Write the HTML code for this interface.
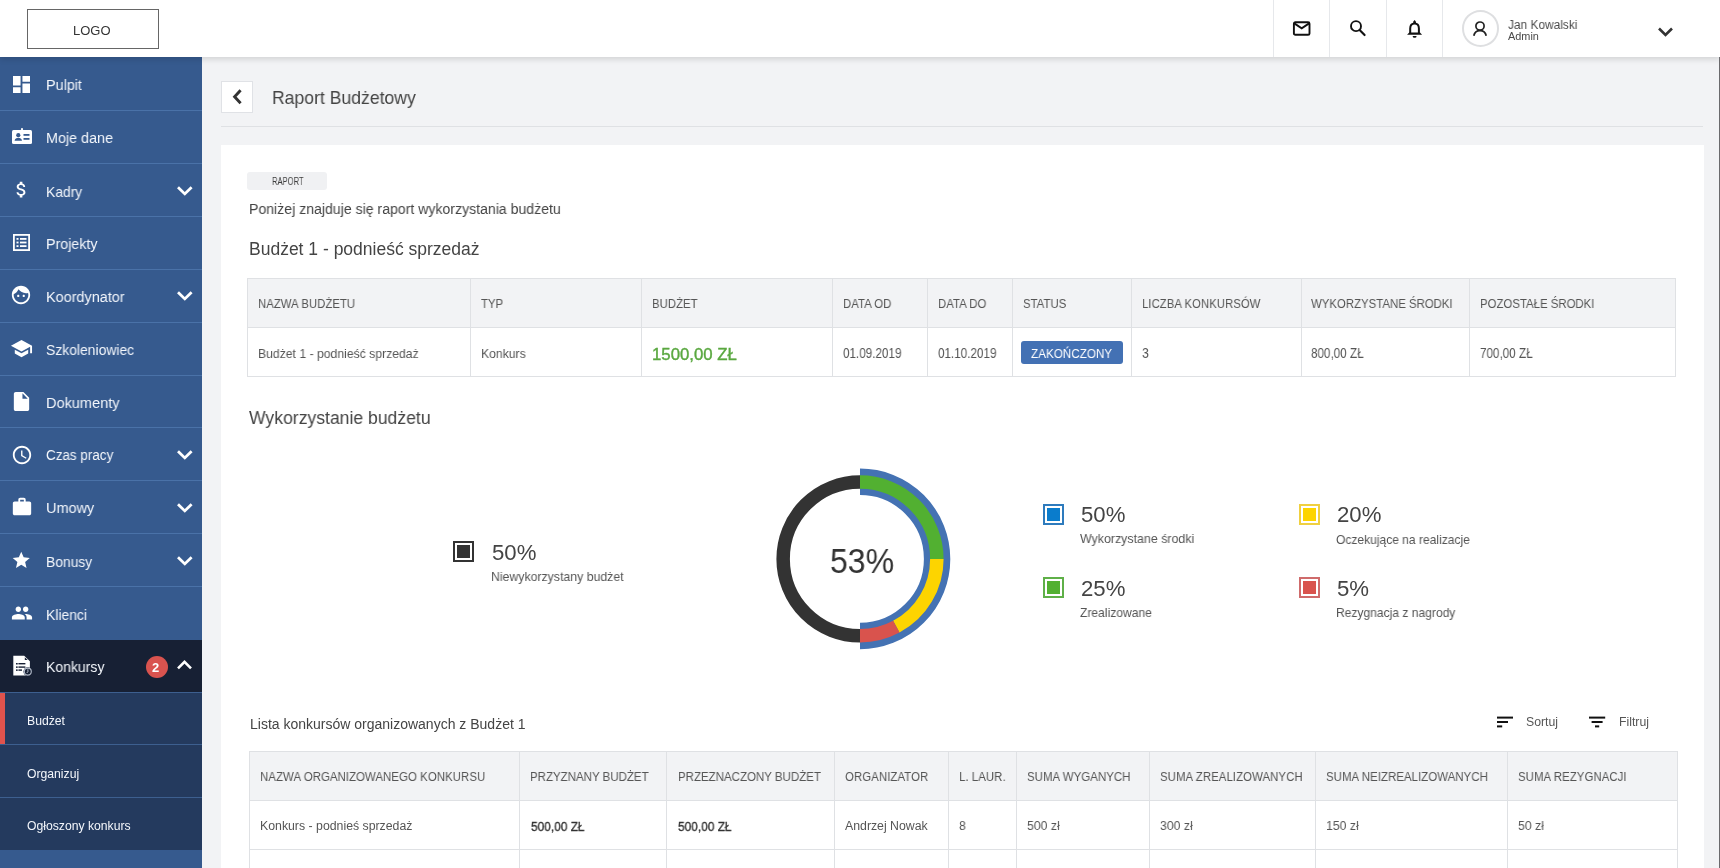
<!DOCTYPE html><html><head><meta charset="utf-8"><style>
*{box-sizing:border-box;margin:0;padding:0}
html,body{width:1720px;height:868px;overflow:hidden}
body{position:relative;background:#f2f3f5;font-family:"Liberation Sans",sans-serif;color:#444}
.t{position:absolute;white-space:nowrap;line-height:1;will-change:transform}
svg{position:absolute;display:block}
#hdr{position:absolute;left:0;top:0;width:1720px;height:57px;background:#fff;z-index:5;box-shadow:0 2px 6px rgba(0,0,0,.15)}
#logo{position:absolute;left:27px;top:9px;width:132px;height:40px;border:1px solid #666}
.hdiv{position:absolute;top:0;width:1px;height:57px;background:#e6e8eb}
#side{position:absolute;left:0;top:57px;width:202px;height:811px;background:#365a8e;z-index:3;overflow:hidden}
.mi{position:absolute;left:0;width:202px}
.sep{position:absolute;left:0;width:202px;height:1px;background:#4a72a8}
#rline{position:absolute;left:1719px;top:57px;width:1px;height:811px;background:#6a6a6d;z-index:6}
#card{position:absolute;left:221px;top:145px;width:1483px;height:760px;background:#fff}
table{border-collapse:collapse;position:absolute;table-layout:fixed}
td,th{border:1px solid #dfe1e4;font-weight:normal;text-align:left;white-space:nowrap;overflow:hidden;padding:0 0 0 10px}
th{background:#f2f3f5;color:#555;font-size:11.5px}
td{color:#555;font-size:12.2px}
</style></head><body><div id="hdr"><div id="logo"></div><div class="t" style="left:73.20px;top:24.00px;font-size:13.00px;color:#333;">LOGO</div><div class="hdiv" style="left:1273px"></div><div class="hdiv" style="left:1329px"></div><div class="hdiv" style="left:1386px"></div><div class="hdiv" style="left:1442px"></div><svg style="left:1292px;top:21px" width="20" height="16" viewBox="0 0 20 16"><rect x="1.9" y="1.3" width="15.6" height="12.5" rx="1.4" fill="none" stroke="#111" stroke-width="1.9"/><path d="M2.3 2.4 L9.7 7.3 L17.1 2.4" fill="none" stroke="#111" stroke-width="1.9"/></svg><svg style="left:1348px;top:19px" width="20" height="20" viewBox="0 0 20 20"><circle cx="8" cy="7.15" r="5" fill="none" stroke="#111" stroke-width="1.9"/><path d="M11.6 10.9 L16.6 16.1" stroke="#111" stroke-width="2.1" stroke-linecap="round"/></svg><svg style="left:1405px;top:18px" width="19" height="21" viewBox="0 0 19 21"><path d="M5.2 15.2 V10.5 C5.2 7.3 7 5.5 9.6 5.5 C12.2 5.5 13.9 7.3 13.9 10.5 V15.2" fill="none" stroke="#111" stroke-width="2"/><path d="M2.1 16.8 L4.2 14.6 H15 L17.1 16.8 Z" fill="#111"/><path d="M8.3 3.6 L9.6 1.9 L10.9 3.6 L11 5 H8.2 Z" fill="#111"/><path d="M7.6 17.9 H11.6 A2 1.9 0 0 1 7.6 17.9 Z" fill="#111"/></svg><div style="position:absolute;left:1461.5px;top:10.3px;width:37px;height:36.5px;border-radius:50%;border:2px solid #dedfe1"></div><svg style="left:1472px;top:21px" width="16" height="16" viewBox="0 0 16 16"><circle cx="8" cy="5.1" r="4.1" fill="none" stroke="#222" stroke-width="1.7"/><path d="M1.8 14.7 C2.5 11.5 4.5 9.6 8 9.6 C11.5 9.6 13.5 11.5 14.2 14.7" fill="none" stroke="#222" stroke-width="1.8"/></svg><div class="t" style="left:1507.90px;top:17.92px;font-size:13.09px;transform:scaleX(0.9091);transform-origin:0 0;color:#4a4a4a;">Jan Kowalski</div><div class="t" style="left:1507.90px;top:31.17px;font-size:10.90px;color:#4a4a4a;">Admin</div><svg style="left:1657px;top:26px" width="17" height="12" viewBox="0 0 17 12"><path d="M2 2.5 L8.5 9 L15 2.5" fill="none" stroke="#333" stroke-width="2.6"/></svg></div>
<div id="side"><svg style="left:13px;top:18.7px" width="17" height="17" viewBox="3 3 18 18"><path fill="#fff" d="M3 13h8V3H3v10zm0 8h8v-6H3v6zm10 0h8V11h-8v10zm0-18v6h8V3h-8z"/></svg><div class="t" style="left:46.00px;top:21.28px;font-size:14.68px;transform:scaleX(0.9804);transform-origin:0 0;color:#f4f7fc;">Pulpit</div><div class="sep" style="top:53.0px"></div><svg style="left:12px;top:70.9px" width="20" height="16" viewBox="0 0 20 16"><rect x="0" y="2" width="20" height="14" rx="1.5" fill="#fff"/><circle cx="10" cy="1.2" r="1.1" fill="#fff"/><circle cx="6.3" cy="7.2" r="2.1" fill="#365a8e"/><path d="M2.6 12.8 C3 10.5 4.5 9.8 6.3 9.8 C8.1 9.8 9.6 10.5 10 12.8 Z" fill="#365a8e"/><rect x="11.5" y="6" width="6" height="1.8" fill="#365a8e"/><rect x="11.5" y="10" width="6" height="1.8" fill="#365a8e"/></svg><div class="t" style="left:46.00px;top:74.21px;font-size:14.64px;transform:scaleX(0.9804);transform-origin:0 0;color:#f4f7fc;">Moje dane</div><div class="sep" style="top:105.9px"></div><svg style="left:10.5px;top:122.3px" width="21" height="21" viewBox="0 0 24 24"><path fill="#fff" d="M11.8 10.9c-2.27-.59-3-1.2-3-2.15 0-1.09 1.01-1.85 2.7-1.850 1.78 0 2.44.85 2.5 2.1h2.21c-.07-1.72-1.12-3.3-3.21-3.81V3h-3v2.16c-1.94.42-3.5 1.68-3.5 3.61 0 2.31 1.910 3.46 4.7 4.13 2.5.6 3 1.48 3 2.41 0 .69-.49 1.79-2.7 1.79-2.06 0-2.87-.92-2.98-2.1h-2.2c.12 2.19 1.76 3.42 3.68 3.83V21h3v-2.15c1.95-.37 3.5-1.5 3.5-3.55 0-2.84-2.43-3.81-4.7-4.4z"/></svg><div class="t" style="left:46.00px;top:127.53px;font-size:14.14px;transform:scaleX(0.9804);transform-origin:0 0;color:#f4f7fc;">Kadry</div><svg style="left:176px;top:127.5px" width="17" height="12" viewBox="0 0 17 12"><path d="M2 2.2 L8.8 8.9 L15.6 2.2" fill="none" stroke="#fff" stroke-width="2.8"/></svg><div class="sep" style="top:158.8px"></div><svg style="left:13px;top:176.7px" width="17" height="17" viewBox="0 0 17 17"><rect x="0.9" y="0.9" width="15.2" height="15.2" fill="none" stroke="#fff" stroke-width="1.8"/><rect x="3.5" y="4" width="2" height="1.8" fill="#fff"/><rect x="7" y="4" width="6.5" height="1.8" fill="#fff"/><rect x="3.5" y="7.6" width="2" height="1.8" fill="#fff"/><rect x="7" y="7.6" width="6.5" height="1.8" fill="#fff"/><rect x="3.5" y="11.2" width="2" height="1.8" fill="#fff"/><rect x="7" y="11.2" width="6.5" height="1.8" fill="#fff"/></svg><div class="t" style="left:46.00px;top:180.09px;font-size:14.55px;transform:scaleX(0.9804);transform-origin:0 0;color:#f4f7fc;">Projekty</div><div class="sep" style="top:211.7px"></div><svg style="left:10px;top:227.1px" width="22" height="22" viewBox="0 0 24 24"><path fill="#fff" d="M9 11.75c-.69 0-1.25.56-1.25 1.25s.56 1.25 1.25 1.25 1.25-.56 1.25-1.25-.56-1.25-1.25-1.25zm6 0c-.69 0-1.25.56-1.25 1.25s.56 1.25 1.25 1.25 1.25-.56 1.25-1.25-.56-1.25-1.25-1.25zM12 2C6.48 2 2 6.48 2 12s4.48 10 10 10 10-4.48 10-10S17.52 2 12 2zm0 18c-4.41 0-8-3.59-8-8 0-.29.02-.58.05-.86 2.36-1.05 4.230-2.98 5.21-5.37C11.07 8.33 14.05 10 17.42 10c.78 0 1.53-.09 2.25-.26.21.71.33 1.47.33 2.26 0 4.41-3.59 8-8 8z"/></svg><div class="t" style="left:46.00px;top:232.84px;font-size:14.72px;transform:scaleX(0.9804);transform-origin:0 0;color:#f4f7fc;">Koordynator</div><svg style="left:176px;top:233.3px" width="17" height="12" viewBox="0 0 17 12"><path d="M2 2.2 L8.8 8.9 L15.6 2.2" fill="none" stroke="#fff" stroke-width="2.8"/></svg><div class="sep" style="top:264.6px"></div><svg style="left:10px;top:279.5px" width="23" height="23" viewBox="0 0 24 24"><path fill="#fff" d="M5 13.18v4L12 21l7-3.82v-4L12 17l-7-3.82zM12 3L1 9l11 6 9-4.91V17h2V9L12 3z"/></svg><div class="t" style="left:46.00px;top:286.18px;font-size:14.20px;transform:scaleX(0.9804);transform-origin:0 0;color:#f4f7fc;">Szkoleniowiec</div><div class="sep" style="top:317.5px"></div><svg style="left:10.4px;top:332.6px" width="23" height="23" viewBox="0 0 24 24"><path fill="#fff" d="M6 2c-1.1 0-1.99.9-1.990 2L4 20c0 1.1.89 2 1.99 2H18c1.1 0 2-.9 2-2V8l-6-6H6zm7 7V3.5L18.5 9H13z"/></svg><div class="t" style="left:46.00px;top:338.55px;font-size:14.82px;transform:scaleX(0.9804);transform-origin:0 0;color:#f4f7fc;">Dokumenty</div><div class="sep" style="top:370.4px"></div><svg style="left:10.6px;top:386.6px" width="22" height="22" viewBox="0 0 24 24"><path fill="#fff" d="M11.99 2C6.47 2 2 6.48 2 12s4.47 10 9.99 10C17.52 22 22 17.52 22 12S17.52 2 11.99 2zM12 20c-4.42 0-8-3.58-8-8s3.58-8 8-8 8 3.58 8 8-3.58 8-8 8zm.5-13H11v6l5.25 3.15.75-1.23-4.5-2.67z"/></svg><div class="t" style="left:46.00px;top:392.40px;font-size:13.71px;transform:scaleX(0.9804);transform-origin:0 0;color:#f4f7fc;">Czas pracy</div><svg style="left:176px;top:392.0px" width="17" height="12" viewBox="0 0 17 12"><path d="M2 2.2 L8.8 8.9 L15.6 2.2" fill="none" stroke="#fff" stroke-width="2.8"/></svg><div class="sep" style="top:423.3px"></div><svg style="left:10.6px;top:439.2px" width="22" height="22" viewBox="0 0 24 24"><path fill="#fff" d="M20 6h-4V4c0-1.11-.89-2-2-2h-4c-1.11 0-2 .89-2 2v2H4c-1.11 0-1.99.89-1.99 2L2 19c0 1.11.89 2 2 2h16c1.11 0 2-.89 2-2V8c0-1.11-.89-2-2-2zm-6 0h-4V4h4v2z"/></svg><div class="t" style="left:46.00px;top:444.41px;font-size:14.75px;transform:scaleX(0.9804);transform-origin:0 0;color:#f4f7fc;">Umowy</div><svg style="left:176px;top:444.9px" width="17" height="12" viewBox="0 0 17 12"><path d="M2 2.2 L8.8 8.9 L15.6 2.2" fill="none" stroke="#fff" stroke-width="2.8"/></svg><div class="sep" style="top:476.2px"></div><svg style="left:11.1px;top:492.7px" width="20.5" height="20.5" viewBox="0 0 24 24"><path fill="#fff" d="M12 17.27L18.18 21l-1.64-7.03L22 9.24l-7.19-.61L12 2 9.19 8.630 2 9.24l5.46 4.73L5.82 21z"/></svg><div class="t" style="left:46.00px;top:497.84px;font-size:14.13px;transform:scaleX(0.9804);transform-origin:0 0;color:#f4f7fc;">Bonusy</div><svg style="left:176px;top:497.8px" width="17" height="12" viewBox="0 0 17 12"><path d="M2 2.2 L8.8 8.9 L15.6 2.2" fill="none" stroke="#fff" stroke-width="2.8"/></svg><div class="sep" style="top:529.1px"></div><svg style="left:10.55px;top:544.5px" width="22" height="22" viewBox="0 0 24 24"><path fill="#fff" d="M16 11c1.66 0 2.99-1.34 2.99-3S17.66 5 16 5c-1.66 0-3 1.34-3 3s1.34 3 3 3zm-8 0c1.66 0 2.99-1.34 2.99-3S9.66 5 8 5C6.34 5 5 6.34 5 8s1.34 3 3 3zm0 2c-2.33 0-7 1.17-7 3.5V19h14v-2.5c0-2.33-4.67-3.5-7-3.5zm8 0c-.29 0-.62.02-.97.05 1.16.84 1.97 1.97 1.97 3.45V19h6v-2.5c0-2.33-4.67-3.5-7-3.5z"/></svg><div class="t" style="left:46.00px;top:550.66px;font-size:14.23px;transform:scaleX(0.9804);transform-origin:0 0;color:#f4f7fc;">Klienci</div><div class="mi" style="top:583px;height:52px;background:#172034"></div><svg style="left:12px;top:598px" width="22" height="24" viewBox="0 0 22 24"><path fill="#fff" d="M1.3 0.8 H12.2 L17.9 6.2 V20.6 H1.3 Z"/><path fill="#172034" d="M12.8 2.3 V5.1 H15.7 Z"/><rect x="4" y="8" width="1.7" height="1.5" fill="#172034"/><rect x="6.4" y="8" width="7" height="1.4" fill="#172034"/><rect x="4" y="11.4" width="1.7" height="1.5" fill="#172034"/><rect x="6.4" y="11.4" width="7" height="1.4" fill="#172034"/><rect x="4" y="14.4" width="1.7" height="1.5" fill="#172034"/><rect x="6.4" y="14.4" width="3.6" height="1.4" fill="#172034"/><circle cx="15.8" cy="16.6" r="4.3" fill="#172034"/><circle cx="15.8" cy="16.6" r="3.5" fill="none" stroke="#b4bccb" stroke-width="1.1"/><path d="M15.9 14.3 V16.8 L14.7 18" fill="none" stroke="#b4bccb" stroke-width="1"/></svg><div class="t" style="left:46.00px;top:602.90px;font-size:14.29px;transform:scaleX(0.9804);transform-origin:0 0;color:#f4f7fc;">Konkursy</div><div style="position:absolute;left:146px;top:599px;width:22px;height:22px;border-radius:50%;background:#d9534f"></div><div class="t" style="left:152.20px;top:604.00px;font-size:13.00px;color:#fff;font-weight:bold;">2</div><svg style="left:176px;top:602px" width="17" height="12" viewBox="0 0 17 12"><path d="M2 9.3 L8.5 2.8 L15 9.3" fill="none" stroke="#fff" stroke-width="2.6"/></svg><div class="mi" style="top:635px;height:158px;background:#243a5e"></div><div class="sep" style="top:635px;background:#3d5f8f"></div><div class="sep" style="top:687px;background:#3d5f8f"></div><div class="sep" style="top:740px;background:#3d5f8f"></div><div style="position:absolute;left:0;top:636px;width:5px;height:51px;background:#e0534d"></div><div class="t" style="left:27.40px;top:657.67px;font-size:12.20px;color:#f4f7fc;">Budżet</div><div class="t" style="left:27.40px;top:710.67px;font-size:12.20px;color:#f4f7fc;">Organizuj</div><div class="t" style="left:27.40px;top:762.67px;font-size:12.20px;color:#f4f7fc;">Ogłoszony konkurs</div></div>
<div style="position:absolute;left:221px;top:81px;width:32px;height:32px;background:#fff;border:1px solid #e0e2e6"></div><svg style="left:230px;top:87px" width="14" height="20" viewBox="0 0 14 20"><path d="M10.6 3.3 L4.6 9.8 L10.6 16.3" fill="none" stroke="#333" stroke-width="2.9"/></svg><div class="t" style="left:272.00px;top:89.06px;font-size:18.83px;transform:scaleX(0.9346);transform-origin:0 0;color:#444;">Raport Budżetowy</div><div style="position:absolute;left:221px;top:126px;width:1482px;height:1px;background:#dfe1e4"></div><div id="card"></div>
<div style="position:absolute;left:247px;top:172px;width:80px;height:18px;border-radius:3px;background:#f0f1f3"></div><div class="t" style="left:271.80px;top:176.91px;font-size:10.03px;transform:scaleX(0.7576);transform-origin:0 0;color:#3c3c3c;">RAPORT</div><div class="t" style="left:249.20px;top:201.71px;font-size:14.52px;transform:scaleX(0.9709);transform-origin:0 0;color:#444;">Poniżej znajduje się raport wykorzystania budżetu</div><div class="t" style="left:249.20px;top:241.19px;font-size:17.50px;color:#444;">Budżet 1 - podnieść sprzedaż</div>
<div style="position:absolute;left:247px;top:278px;width:1429px;height:99px;background:#dfe1e4"></div><div style="position:absolute;left:248px;top:279px;width:1427px;height:48px;background:#f2f3f5"></div><div style="position:absolute;left:248px;top:328px;width:1427px;height:48px;background:#fff"></div><div style="position:absolute;left:470px;top:279px;width:1px;height:97px;background:#dfe1e4"></div><div style="position:absolute;left:641px;top:279px;width:1px;height:97px;background:#dfe1e4"></div><div style="position:absolute;left:832px;top:279px;width:1px;height:97px;background:#dfe1e4"></div><div style="position:absolute;left:927px;top:279px;width:1px;height:97px;background:#dfe1e4"></div><div style="position:absolute;left:1012px;top:279px;width:1px;height:97px;background:#dfe1e4"></div><div style="position:absolute;left:1131px;top:279px;width:1px;height:97px;background:#dfe1e4"></div><div style="position:absolute;left:1301px;top:279px;width:1px;height:97px;background:#dfe1e4"></div><div style="position:absolute;left:1469px;top:279px;width:1px;height:97px;background:#dfe1e4"></div><div class="t" style="left:258.30px;top:297.99px;font-size:12.77px;transform:scaleX(0.8929);transform-origin:0 0;color:#555;">NAZWA BUDŻETU</div><div class="t" style="left:258.30px;top:346.95px;font-size:13.18px;transform:scaleX(0.9259);transform-origin:0 0;color:#555;">Budżet 1 - podnieść sprzedaż</div><div class="t" style="left:481.30px;top:297.99px;font-size:12.77px;transform:scaleX(0.8929);transform-origin:0 0;color:#555;">TYP</div><div class="t" style="left:481.30px;top:346.95px;font-size:13.18px;transform:scaleX(0.9259);transform-origin:0 0;color:#555;">Konkurs</div><div class="t" style="left:652.30px;top:297.99px;font-size:12.77px;transform:scaleX(0.8929);transform-origin:0 0;color:#555;">BUDŻET</div><div class="t" style="left:843.30px;top:297.99px;font-size:12.77px;transform:scaleX(0.8929);transform-origin:0 0;color:#555;">DATA OD</div><div class="t" style="left:843.30px;top:346.22px;font-size:14.04px;transform:scaleX(0.8333);transform-origin:0 0;color:#555;">01.09.2019</div><div class="t" style="left:938.30px;top:297.99px;font-size:12.77px;transform:scaleX(0.8929);transform-origin:0 0;color:#555;">DATA DO</div><div class="t" style="left:938.30px;top:346.22px;font-size:14.04px;transform:scaleX(0.8333);transform-origin:0 0;color:#555;">01.10.2019</div><div class="t" style="left:1022.80px;top:297.99px;font-size:12.77px;transform:scaleX(0.8929);transform-origin:0 0;color:#555;">STATUS</div><div class="t" style="left:1142.30px;top:297.99px;font-size:12.77px;transform:scaleX(0.8929);transform-origin:0 0;color:#555;">LICZBA KONKURSÓW</div><div class="t" style="left:1142.30px;top:345.71px;font-size:14.64px;transform:scaleX(0.8333);transform-origin:0 0;color:#555;">3</div><div class="t" style="left:1310.80px;top:297.99px;font-size:12.77px;transform:scaleX(0.8929);transform-origin:0 0;color:#555;">WYKORZYSTANE ŚRODKI</div><div class="t" style="left:1310.80px;top:346.22px;font-size:14.04px;transform:scaleX(0.8333);transform-origin:0 0;color:#555;">800,00 ZŁ</div><div class="t" style="left:1479.80px;top:297.99px;font-size:12.77px;transform:scaleX(0.8929);transform-origin:0 0;color:#555;">POZOSTAŁE ŚRODKI</div><div class="t" style="left:1479.80px;top:346.22px;font-size:14.04px;transform:scaleX(0.8333);transform-origin:0 0;color:#555;">700,00 ZŁ</div><div class="t" style="left:651.70px;top:347.08px;font-size:16.80px;color:#5aa840;-webkit-text-stroke:0.4px #5aa840;">1500,00 ZŁ</div><div style="position:absolute;left:1021px;top:341px;width:102px;height:23px;border-radius:3px;background:#4371b4"></div><div class="t" style="left:1031.20px;top:346.51px;font-size:13.45px;transform:scaleX(0.8696);transform-origin:0 0;color:#fff;">ZAKOŃCZONY</div>
<div class="t" style="left:249.20px;top:408.71px;font-size:18.30px;transform:scaleX(0.9615);transform-origin:0 0;color:#444;">Wykorzystanie budżetu</div><svg style="left:0;top:0" width="1720" height="868" viewBox="0 0 1720 868"><path d="M860.00 635.75 A76.85 76.85 0 0 1 860.00 482.05" fill="none" stroke="#333" stroke-width="13.5"/><path d="M860.00 481.80 A77.1 77.1 0 0 1 860.00 636.00" fill="none" stroke="#4472b3" stroke-width="26.4"/><path d="M860.00 482.05 A76.85 76.85 0 0 1 936.85 558.90" fill="none" stroke="#52b031" stroke-width="13.5"/><path d="M936.85 558.90 A76.85 76.85 0 0 1 896.32 626.63" fill="none" stroke="#fdd400" stroke-width="13.5"/><path d="M896.32 626.63 A76.85 76.85 0 0 1 860.00 635.75" fill="none" stroke="#d9534d" stroke-width="13.5"/></svg><div class="t" style="left:829.70px;top:542.80px;font-size:35.20px;transform:scaleX(0.9091);transform-origin:0 0;color:#333;">53%</div><div style="position:absolute;left:453px;top:540.5px;width:21px;height:21px;border:2px solid #333;padding:2px"><div style="width:13px;height:13px;background:#333"></div></div><div class="t" style="left:492.00px;top:541.61px;font-size:22.20px;color:#444;">50%</div><div class="t" style="left:491.20px;top:569.56px;font-size:13.04px;transform:scaleX(0.9434);transform-origin:0 0;color:#555;">Niewykorzystany budżet</div><div style="position:absolute;left:1043px;top:504px;width:21px;height:21px;border:2px solid #2e7bbd;padding:2px"><div style="width:13px;height:13px;background:#0a7ccc"></div></div><div class="t" style="left:1081.00px;top:504.41px;font-size:22.20px;color:#444;">50%</div><div class="t" style="left:1080.20px;top:533.38px;font-size:12.90px;transform:scaleX(0.9615);transform-origin:0 0;color:#555;">Wykorzystane środki</div><div style="position:absolute;left:1299px;top:504px;width:21px;height:21px;border:2px solid #f0d040;padding:2px"><div style="width:13px;height:13px;background:#fdd400"></div></div><div class="t" style="left:1337.00px;top:504.41px;font-size:22.20px;color:#444;">20%</div><div class="t" style="left:1336.20px;top:533.69px;font-size:12.53px;transform:scaleX(0.9615);transform-origin:0 0;color:#555;">Oczekujące na realizacje</div><div style="position:absolute;left:1043px;top:577.3px;width:21px;height:21px;border:2px solid #5fb048;padding:2px"><div style="width:13px;height:13px;background:#52b031"></div></div><div class="t" style="left:1081.00px;top:577.71px;font-size:22.20px;color:#444;">25%</div><div class="t" style="left:1080.20px;top:606.95px;font-size:12.58px;transform:scaleX(0.9615);transform-origin:0 0;color:#555;">Zrealizowane</div><div style="position:absolute;left:1299px;top:577.3px;width:21px;height:21px;border:2px solid #cf6b6b;padding:2px"><div style="width:13px;height:13px;background:#d9534d"></div></div><div class="t" style="left:1337.00px;top:577.71px;font-size:22.20px;color:#444;">5%</div><div class="t" style="left:1336.20px;top:606.97px;font-size:12.55px;transform:scaleX(0.9615);transform-origin:0 0;color:#555;">Rezygnacja z nagrody</div>
<div class="t" style="left:250.20px;top:717.25px;font-size:14.00px;color:#444;">Lista konkursów organizowanych z Budżet 1</div><svg style="left:1496px;top:716px" width="17" height="12" viewBox="0 0 17 12"><rect x="1" y="0.6" width="16" height="2" fill="#111"/><rect x="1" y="5" width="11" height="2" fill="#111"/><rect x="1" y="9.4" width="5.2" height="2" fill="#111"/></svg><div class="t" style="left:1526.20px;top:716.43px;font-size:12.25px;color:#555;">Sortuj</div><svg style="left:1589px;top:716px" width="17" height="12" viewBox="0 0 17 12"><rect x="0" y="0.6" width="16.2" height="2" fill="#111"/><rect x="2.6" y="5" width="11" height="2" fill="#111"/><rect x="6" y="9.4" width="4.2" height="2" fill="#111"/></svg><div class="t" style="left:1618.70px;top:716.43px;font-size:12.25px;color:#555;">Filtruj</div><div style="position:absolute;left:249px;top:751px;width:1429px;height:117px;background:#dfe1e4"></div><div style="position:absolute;left:250px;top:752px;width:1427px;height:48px;background:#f2f3f5"></div><div style="position:absolute;left:250px;top:801px;width:1427px;height:48px;background:#fff"></div><div style="position:absolute;left:250px;top:850px;width:1427px;height:18px;background:#fff"></div><div style="position:absolute;left:519px;top:752px;width:1px;height:116px;background:#dfe1e4"></div><div style="position:absolute;left:666px;top:752px;width:1px;height:116px;background:#dfe1e4"></div><div style="position:absolute;left:834px;top:752px;width:1px;height:116px;background:#dfe1e4"></div><div style="position:absolute;left:948px;top:752px;width:1px;height:116px;background:#dfe1e4"></div><div style="position:absolute;left:1016px;top:752px;width:1px;height:116px;background:#dfe1e4"></div><div style="position:absolute;left:1149px;top:752px;width:1px;height:116px;background:#dfe1e4"></div><div style="position:absolute;left:1315px;top:752px;width:1px;height:116px;background:#dfe1e4"></div><div style="position:absolute;left:1507px;top:752px;width:1px;height:116px;background:#dfe1e4"></div><div class="t" style="left:260.20px;top:770.50px;font-size:12.88px;transform:scaleX(0.8929);transform-origin:0 0;color:#555;">NAZWA ORGANIZOWANEGO KONKURSU</div><div class="t" style="left:260.20px;top:820.29px;font-size:12.30px;color:#555;">Konkurs - podnieś sprzedaż</div><div class="t" style="left:530.40px;top:770.50px;font-size:12.88px;transform:scaleX(0.8929);transform-origin:0 0;color:#555;">PRZYZNANY BUDŻET</div><div class="t" style="left:531.00px;top:819.62px;font-size:13.09px;transform:scaleX(0.9091);transform-origin:0 0;color:#333;-webkit-text-stroke:0.35px #333;">500,00 ZŁ</div><div class="t" style="left:677.50px;top:770.50px;font-size:12.88px;transform:scaleX(0.8929);transform-origin:0 0;color:#555;">PRZEZNACZONY BUDŻET</div><div class="t" style="left:678.10px;top:819.62px;font-size:13.09px;transform:scaleX(0.9091);transform-origin:0 0;color:#333;-webkit-text-stroke:0.35px #333;">500,00 ZŁ</div><div class="t" style="left:844.60px;top:770.50px;font-size:12.88px;transform:scaleX(0.8929);transform-origin:0 0;color:#555;">ORGANIZATOR</div><div class="t" style="left:844.60px;top:820.29px;font-size:12.30px;color:#555;">Andrzej Nowak</div><div class="t" style="left:958.70px;top:770.50px;font-size:12.88px;transform:scaleX(0.8929);transform-origin:0 0;color:#555;">L. LAUR.</div><div class="t" style="left:958.70px;top:819.25px;font-size:13.53px;transform:scaleX(0.9091);transform-origin:0 0;color:#555;">8</div><div class="t" style="left:1026.70px;top:770.50px;font-size:12.88px;transform:scaleX(0.8929);transform-origin:0 0;color:#555;">SUMA WYGANYCH</div><div class="t" style="left:1026.70px;top:819.25px;font-size:13.53px;transform:scaleX(0.9091);transform-origin:0 0;color:#555;">500 zł</div><div class="t" style="left:1160.10px;top:770.50px;font-size:12.88px;transform:scaleX(0.8929);transform-origin:0 0;color:#555;">SUMA ZREALIZOWANYCH</div><div class="t" style="left:1160.10px;top:819.25px;font-size:13.53px;transform:scaleX(0.9091);transform-origin:0 0;color:#555;">300 zł</div><div class="t" style="left:1326.00px;top:770.50px;font-size:12.88px;transform:scaleX(0.8929);transform-origin:0 0;color:#555;">SUMA NEIZREALIZOWANYCH</div><div class="t" style="left:1326.00px;top:819.25px;font-size:13.53px;transform:scaleX(0.9091);transform-origin:0 0;color:#555;">150 zł</div><div class="t" style="left:1517.50px;top:770.50px;font-size:12.88px;transform:scaleX(0.8929);transform-origin:0 0;color:#555;">SUMA REZYGNACJI</div><div class="t" style="left:1517.50px;top:819.25px;font-size:13.53px;transform:scaleX(0.9091);transform-origin:0 0;color:#555;">50 zł</div>
<div id="rline"></div></body></html>
